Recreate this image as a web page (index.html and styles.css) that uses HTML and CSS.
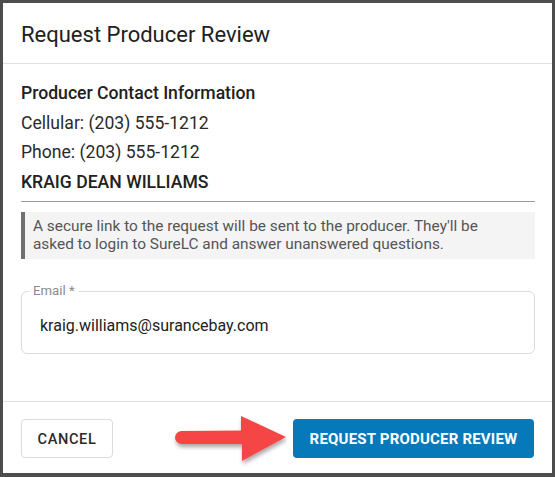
FILE: index.html
```html
<!DOCTYPE html>
<html lang="en">
<head>
<meta charset="utf-8">
<title>Request Producer Review</title>
<link rel="stylesheet" href="styles.css">
</head>
<body>
<div class="dialog">
  <header class="dialog-header">
    <h1 class="dialog-title">Request Producer Review</h1>
  </header>
  <main class="dialog-content">
    <h2 class="contact-heading">Producer Contact Information</h2>
    <div class="contact-line">Cellular: (203) 555-1212</div>
    <div class="contact-line">Phone: (203) 555-1212</div>
    <div class="contact-name">KRAIG DEAN WILLIAMS</div>
    <hr class="divider">
    <div class="note">A secure link to the request will be sent to the producer. They'll be asked to login to SureLC and answer unanswered questions.</div>
    <fieldset class="field">
      <legend class="field-label">Email *</legend>
      <div class="field-value">kraig.williams@surancebay.com</div>
    </fieldset>
  </main>
  <footer class="dialog-footer">
    <button class="btn btn-cancel">CANCEL</button>
    <button class="btn btn-primary">REQUEST PRODUCER REVIEW</button>
    <svg class="arrow" width="120" height="56" viewBox="0 0 120 56" aria-hidden="true">
      <defs>
        <filter id="sh" x="-20%" y="-20%" width="140%" height="160%">
          <feDropShadow dx="1" dy="3" stdDeviation="2" flood-color="#000" flood-opacity="0.35"/>
        </filter>
      </defs>
      <path filter="url(#sh)" fill="#f54545" d="M14.5 18 L74 17.5 L74 3 L119 24 L75 48 L75 31 L14.5 31 A6.5 6.5 0 0 1 14.5 18 Z"/>
    </svg>
  </footer>
</div>
</body>
</html>
```

FILE: styles.css
```css
* { box-sizing: border-box; }

html, body {
  margin: 0;
  padding: 0;
}

body {
  background: #4d4d4d;
  padding: 3px;
  font-family: Roboto, "Liberation Sans", Arial, sans-serif;
  color: #212121;
  width: 555px;
  height: 477px;
  overflow: hidden;
}

.dialog {
  width: 549px;
  height: 470px;
  background: #fff;
  display: flex;
  flex-direction: column;
}

.dialog-header {
  height: 61px;
  border-bottom: 1px solid #e0e0e0;
  display: flex;
  align-items: center;
  padding: 0 18px;
}

.dialog-title {
  margin: 0;
  font-size: 22px;
  font-weight: 400;
  color: #212121;
  padding-top: 2px;
}

.dialog-content {
  flex: 1;
  padding: 15px 17px 0 18px;
}

.contact-heading {
  margin: 0;
  font-size: 17.6px;
  font-weight: 500;
  line-height: 29.5px;
  color: #212121;
}

.contact-line {
  font-size: 17.6px;
  line-height: 29.5px;
  color: #2a2a2a;
}

.contact-name {
  font-size: 17.6px;
  font-weight: 500;
  line-height: 29.5px;
  color: #212121;
}

.divider {
  margin: 4px 0 0 0;
  border: 0;
  border-top: 1px solid #9a9a9a;
  height: 0;
}

.note {
  margin-top: 10px;
  background: #f4f4f4;
  border-left: 4px solid #707070;
  padding: 6px 30px 6px 8px;
  font-size: 15.4px;
  line-height: 17.5px;
  color: #555;
}

.field {
  margin: 25px 0 0 0;
  height: 70px;
  border: 1px solid #dcdcdc;
  border-radius: 6px;
  padding: 0 0 0 7px;
}

.field-label {
  padding: 0 4px;
  font-size: 13.2px;
  line-height: 14px;
  color: #8a8a8a;
}

.field-value {
  margin-left: 11px;
  margin-top: 18px;
  font-size: 16px;
  line-height: 20px;
  color: #212121;
}

.dialog-footer {
  position: relative;
  height: 72px;
  border-top: 1px solid #e0e0e0;
  display: flex;
  justify-content: space-between;
  align-items: flex-start;
  padding: 17px 18px 0 18px;
}

.btn {
  height: 39px;
  border-radius: 4px;
  font-family: Roboto, "Liberation Sans", Arial, sans-serif;
  font-size: 14.6px;
  font-weight: 500;
  letter-spacing: 0.6px;
  cursor: pointer;
}

.btn-cancel {
  width: 92px;
  background: #fff;
  border: 1px solid #dcdcdc;
  color: #2b2b2b;
}

.btn-primary {
  width: 241px;
  background: #0679bb;
  border: 0;
  color: #fff;
  font-size: 15px;
  font-weight: 700;
  letter-spacing: 0.2px;
}

.arrow {
  position: absolute;
  left: 164px;
  top: 11px;
}
```
